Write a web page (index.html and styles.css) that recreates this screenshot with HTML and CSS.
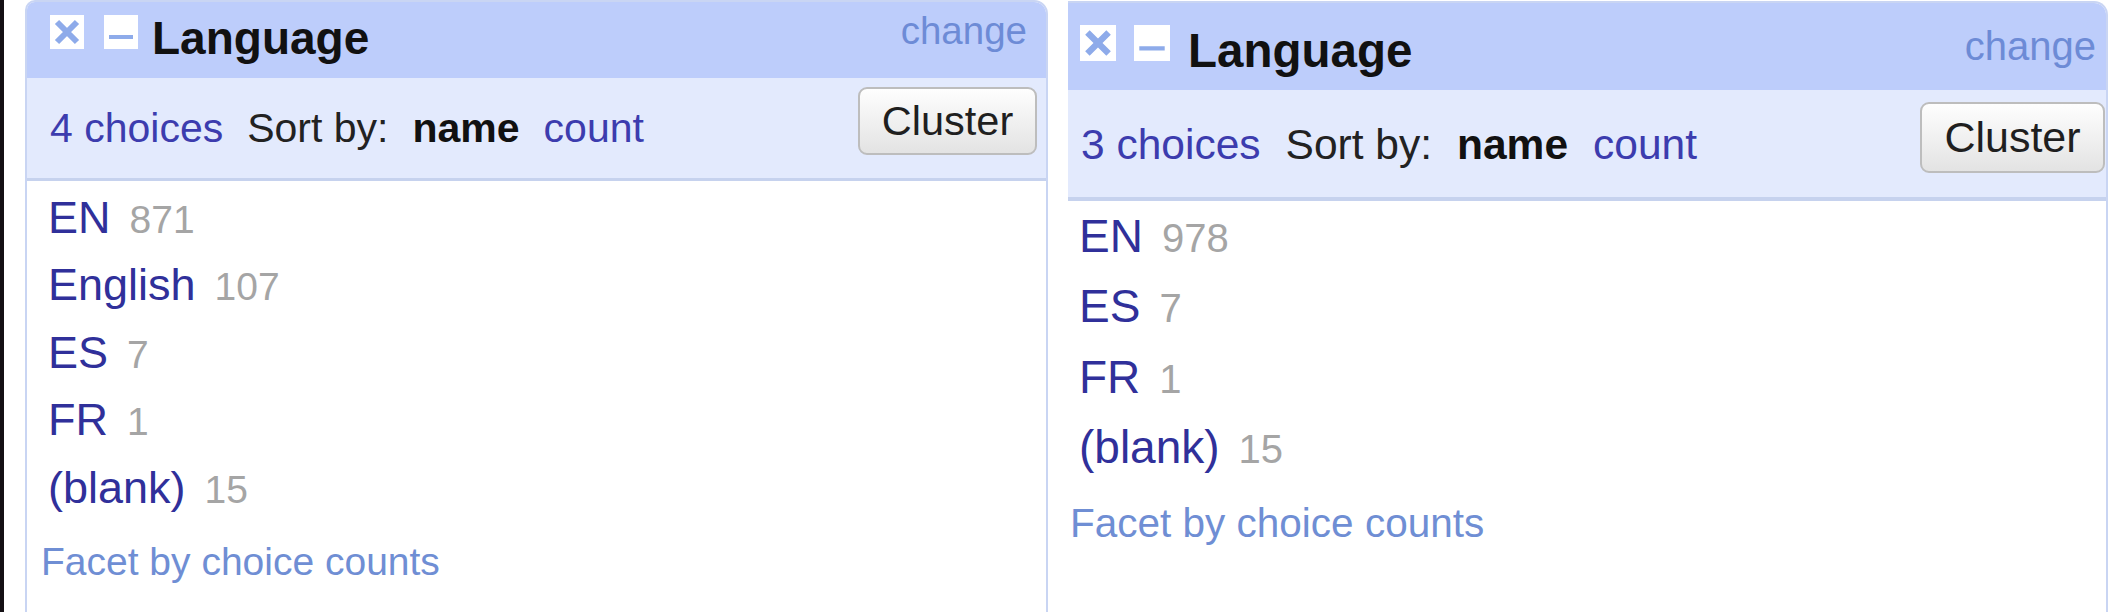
FILE: index.html
```html
<!DOCTYPE html>
<html lang="en">
<head>
<meta charset="utf-8">
<title>Language facets</title>
<link rel="stylesheet" href="styles.css">
</head>
<body>
<div class="edge"></div>

<section class="facet facet-a">
  <header class="facet-head">
    <span class="icon"><svg viewBox="0 0 34 34"><rect width="34" height="34" fill="#fff"/><path d="M7 7 L27 27 M27 7 L7 27" stroke="#8eabea" stroke-width="6"/></svg></span>
    <span class="icon"><svg viewBox="0 0 34 34"><rect width="34" height="34" fill="#fff"/><path d="M5 22 L29 22" stroke="#8eabea" stroke-width="4"/></svg></span>
    <span class="title">Language</span>
    <a class="change">change</a>
  </header>
  <div class="facet-controls">
    <a class="ctl link">4 choices</a>
    <span class="ctl sort">Sort by:</span>
    <span class="ctl sort-on">name</span>
    <a class="ctl link">count</a>
    <button class="cluster">Cluster</button>
  </div>
  <div class="facet-body">
    <div class="choice"><a class="name">EN</a><span class="count">871</span></div>
    <div class="choice"><a class="name">English</a><span class="count">107</span></div>
    <div class="choice"><a class="name">ES</a><span class="count">7</span></div>
    <div class="choice"><a class="name">FR</a><span class="count">1</span></div>
    <div class="choice"><a class="name">(blank)</a><span class="count">15</span></div>
    <a class="facet-by">Facet by choice counts</a>
  </div>
</section>

<section class="facet facet-b">
  <header class="facet-head">
    <span class="icon"><svg viewBox="0 0 34 34"><rect width="34" height="34" fill="#fff"/><path d="M7 7 L27 27 M27 7 L7 27" stroke="#8eabea" stroke-width="6"/></svg></span>
    <span class="icon"><svg viewBox="0 0 34 34"><rect width="34" height="34" fill="#fff"/><path d="M5 22 L29 22" stroke="#8eabea" stroke-width="4"/></svg></span>
    <span class="title">Language</span>
    <a class="change">change</a>
  </header>
  <div class="facet-controls">
    <a class="ctl link">3 choices</a>
    <span class="ctl sort">Sort by:</span>
    <span class="ctl sort-on">name</span>
    <a class="ctl link">count</a>
    <button class="cluster">Cluster</button>
  </div>
  <div class="facet-body">
    <div class="choice"><a class="name">EN</a><span class="count">978</span></div>
    <div class="choice"><a class="name">ES</a><span class="count">7</span></div>
    <div class="choice"><a class="name">FR</a><span class="count">1</span></div>
    <div class="choice"><a class="name">(blank)</a><span class="count">15</span></div>
    <a class="facet-by">Facet by choice counts</a>
  </div>
</section>
</body>
</html>
```

FILE: styles.css
```css
* { box-sizing: border-box; }

html, body {
  margin: 0;
  padding: 0;
  height: 100%;
  overflow: hidden;
  background: #fff;
}

body {
  display: flex;
  align-items: flex-start;
  font-family: "Liberation Sans", Arial, sans-serif;
}

.edge {
  flex: none;
  width: 4px;
  height: 612px;
  background: #141014;
}

.facet {
  flex: none;
  display: flex;
  flex-direction: column;
  height: 660px;
  border: 2px solid #c9d5f3;
  border-top-left-radius: 10px;
  border-top-right-radius: 14px;
  overflow: hidden;
  background: #fff;
}

.facet-a {
  width: 1023px;
  margin-left: 21px;
}

.facet-b {
  width: 1040px;
  margin-left: 20px;
  margin-top: 1px;
  border-left: none;
  border-top-left-radius: 0;
}

/* header */
.facet-head {
  flex: none;
  display: flex;
  align-items: flex-start;
  height: 76px;
  padding: 0 19px 0 23px;
  background: #bdcdfb;
}

.icon {
  flex: none;
  display: block;
  width: 34px;
  height: 34px;
  margin-top: 13px;
}

.icon svg {
  display: block;
  width: 100%;
  height: 100%;
}

.icon + .icon { margin-left: 20px; }

.title {
  margin-left: 14px;
  margin-top: 13px;
  font-size: 46px;
  line-height: 46px;
  font-weight: bold;
  color: #111;
}

.change {
  margin-left: auto;
  margin-top: 10px;
  font-size: 38.5px;
  line-height: 38.5px;
  color: #6d8bd6;
}

/* controls */
.facet-controls {
  flex: none;
  display: flex;
  align-items: flex-start;
  height: 103px;
  padding: 0 9px 0 23px;
  background: #e3eafd;
  border-bottom: 3px solid #c6d2ee;
}

.ctl {
  margin-top: 30px;
  margin-right: 24px;
  font-size: 41px;
  line-height: 41px;
  white-space: nowrap;
}

.link { color: #3c3cae; }
.sort { color: #222; }
.sort-on { color: #111; font-weight: bold; }

.cluster {
  margin-left: auto;
  margin-top: 9px;
  width: 179px;
  height: 68px;
  padding: 0;
  font-family: "Liberation Sans", Arial, sans-serif;
  font-size: 41.5px;
  color: #1f1f1f;
  background: linear-gradient(#fefefe, #e3e3e3);
  border: 2px solid #bdbdbd;
  border-radius: 9px;
}

/* body */
.facet-body {
  flex: 1;
  padding: 2.7px 0 0 21px;
}

.choice {
  height: 67.5px;
  line-height: 67.5px;
  font-size: 45px;
  white-space: nowrap;
}

.name { color: #30309a; }

.count {
  margin-left: 19px;
  font-size: 39px;
  line-height: 1;
  color: #a5a5a5;
}

.facet-by {
  display: block;
  margin-left: -7px;
  margin-top: 21px;
  font-size: 39px;
  line-height: 39px;
  color: #6f8ed4;
  white-space: nowrap;
}

/* second (larger) capture */
.facet-b .facet-head {
  height: 87px;
  padding: 0 10px 0 12px;
}

.facet-b .icon {
  width: 36px;
  height: 36px;
  margin-top: 22px;
}

.facet-b .icon + .icon { margin-left: 18px; }

.facet-b .title {
  margin-left: 18px;
  margin-top: 24px;
  font-size: 47.5px;
  line-height: 47.5px;
}

.facet-b .change {
  margin-top: 23px;
  font-size: 40px;
  line-height: 40px;
}

.facet-b .facet-controls {
  height: 111px;
  padding: 0 1px 0 13px;
  border-bottom-width: 4px;
}

.facet-b .ctl {
  margin-top: 34px;
  margin-right: 25px;
  font-size: 42.5px;
  line-height: 42.5px;
}

.facet-b .cluster {
  margin-top: 12px;
  width: 185px;
  height: 71px;
  font-size: 43px;
}

.facet-b .facet-body { padding: 0 0 0 11px; }

.facet-b .choice {
  height: 70.3px;
  line-height: 70.3px;
  font-size: 46px;
}

.facet-b .count { font-size: 40px; }

.facet-b .facet-by {
  margin-left: -9px;
  margin-top: 20.5px;
  font-size: 40.5px;
  line-height: 40.5px;
}
```
